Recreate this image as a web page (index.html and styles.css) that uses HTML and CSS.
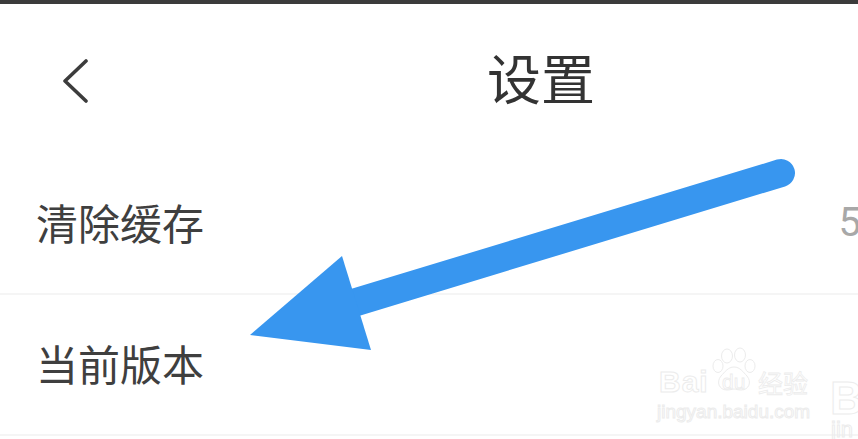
FILE: index.html
```html
<!DOCTYPE html>
<html lang="zh-CN">
<head>
<meta charset="utf-8">
<title>设置</title>
<link rel="stylesheet" href="styles.css">
</head>
<body>
<div class="page">
  <div class="statusbar"></div>
  <header class="header">
    <svg class="back" width="26" height="44" viewBox="0 0 26 44"><path d="M24 2 L3 22 L24 42" fill="none" stroke="#3c3c3c" stroke-width="3.6" stroke-linecap="round" stroke-linejoin="round"/></svg>
    <h1 class="title">设置</h1>
  </header>
  <section class="row"><span class="label">清除缓存</span><span class="value">5</span></section>
  <section class="row"><span class="label">当前版本</span></section>

  <svg class="arrow" width="858" height="439" viewBox="0 0 858 439">
    <line x1="781" y1="173" x2="340" y2="307" stroke="#3896ef" stroke-width="28" stroke-linecap="round"/>
    <polygon points="250,335 342,256 371,350" fill="#3896ef"/>
  </svg>

  <div class="mark mark-one">
    <span class="mark-bai">Bai</span>
    <svg class="paw" width="46" height="46" viewBox="0 0 46 46" fill="#fff" stroke="#ececec" stroke-width="1">
      <ellipse cx="15" cy="9" rx="5.5" ry="7"/>
      <ellipse cx="28" cy="8" rx="5.5" ry="7"/>
      <ellipse cx="6" cy="19" rx="5" ry="6.5"/>
      <ellipse cx="38" cy="19" rx="5" ry="6.5"/>
      <path d="M22 20c6 0 9 5 13 9 5 6 2 14-6 14-3 0-5-1-7-1s-4 1-7 1c-8 0-11-8-6-14 4-4 7-9 13-9z"/>
    </svg>
    <span class="mark-du">du</span>
    <span class="mark-cn">经验</span>
    <span class="mark-url">jingyan.baidu.com</span>
  </div>
  <div class="mark mark-two">
    <span class="mark-b">B</span>
    <span class="mark-jin">jin</span>
  </div>
</div>
</body>
</html>
```

FILE: styles.css
```css
* { box-sizing: border-box; margin: 0; padding: 0; }
html, body { width: 858px; height: 439px; overflow: hidden; background: #fff; }
body { font-family: "Noto Sans CJK SC", "Noto Sans", sans-serif; color: #3c3c3c; }
.page { position: relative; width: 858px; height: 439px; overflow: hidden; }
.statusbar { height: 4px; background: #3b3b3b; }
.header { height: 151px; display: flex; align-items: flex-start; padding: 55px 0 0 62px; }
.back { flex: none; }
.title { margin: -18px 0 0 399px; font-size: 54px; line-height: 72px; font-weight: 400; color: #333; }
.row { height: 140px; border-bottom: 2px solid #f5f5f5; padding-left: 36px; display: flex; align-items: center; justify-content: space-between; padding-bottom: 4px; overflow: hidden; }
.row:last-of-type { height: 141px; }
.label { font-size: 42px; line-height: 58px; color: #3f3f3f; }
.value { font-family: "Roboto", sans-serif; font-size: 40px; color: #a8a8a8; margin-right: -3px; }
.arrow { position: absolute; left: 0; top: 0; }
.mark { position: absolute; color: transparent; -webkit-text-stroke: 1px #ececec; font-family: "Liberation Sans", sans-serif; }
.mark span { position: absolute; white-space: nowrap; }
.mark-one { left: 657px; top: 346px; width: 155px; height: 76px; }
.mark-bai { left: 2px; top: 19px; font-size: 30px; line-height: 34px; font-weight: 700; letter-spacing: 1px; }
.paw { position: absolute; left: 55px; top: 1px; }
.mark-du { left: 65px; top: 24px; font-size: 21px; line-height: 24px; -webkit-text-stroke-width: .8px; }
.mark-cn { left: 101px; top: 22px; font-family: "Noto Sans CJK SC", sans-serif; font-size: 25px; line-height: 28px; -webkit-text-stroke-width: .8px; }
.mark-url { left: 0; top: 55px; font-size: 19px; line-height: 22px; }
.mark-two { left: 830px; top: 378px; width: 28px; height: 61px; overflow: hidden; }
.mark-b { left: 0; top: 0; font-size: 46px; line-height: 40px; font-weight: 700; }
.mark-jin { left: 1px; top: 42px; font-size: 22px; line-height: 19px; }
```
